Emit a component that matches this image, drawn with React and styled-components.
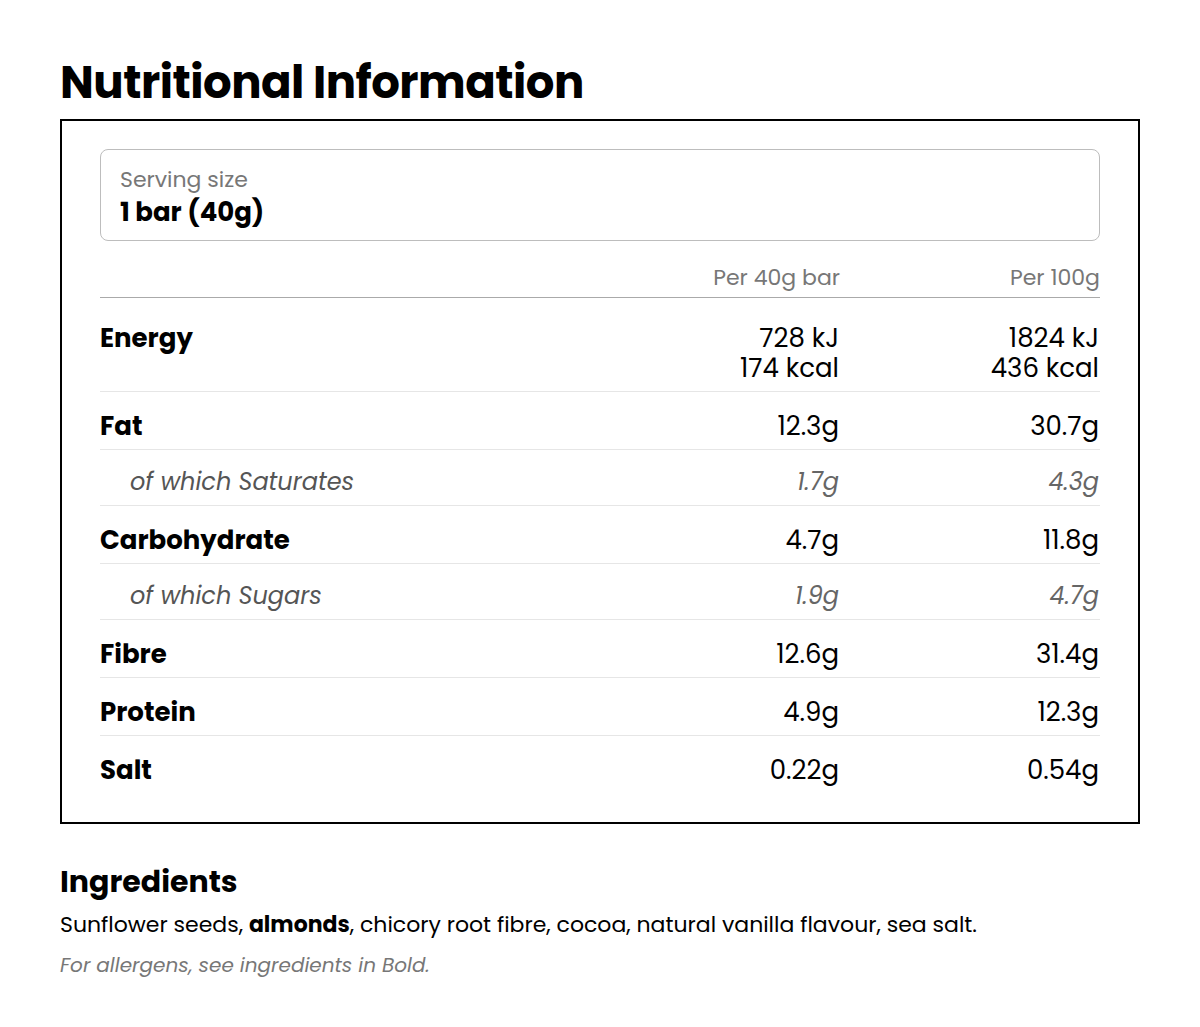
import React from 'react';
import styled, { createGlobalStyle } from 'styled-components';

const GlobalStyle = createGlobalStyle`
  html, body {
    margin: 0;
    padding: 0;
    background: #fff;
  }
  body {
    font-family: Poppins, Inter, "Noto Sans", sans-serif;
    color: #000;
  }
`;

const rows = [
  { label: 'Energy', a: ['728 kJ', '174 kcal'], b: ['1824 kJ', '436 kcal'] },
  { label: 'Fat', a: ['12.3g'], b: ['30.7g'] },
  { label: 'of which Saturates', a: ['1.7g'], b: ['4.3g'], sub: true },
  { label: 'Carbohydrate', a: ['4.7g'], b: ['11.8g'] },
  { label: 'of which Sugars', a: ['1.9g'], b: ['4.7g'], sub: true },
  { label: 'Fibre', a: ['12.6g'], b: ['31.4g'] },
  { label: 'Protein', a: ['4.9g'], b: ['12.3g'] },
  { label: 'Salt', a: ['0.22g'], b: ['0.54g'] },
];

const Page = styled.main`
  width: 1080px;
  padding: 54px 60px 40px;
`;

const Title = styled.h1`
  margin: 0 0 7px;
  font-size: 45px;
  font-weight: 700;
  line-height: 58px;
  letter-spacing: -0.5px;
`;

const Panel = styled.section`
  border: 2px solid #000;
  padding: 28px 38px 29px;
`;

const Serving = styled.div`
  border: 1px solid #bdbdbd;
  border-radius: 8px;
  padding: 15px 19px 11px;
  margin-bottom: 22px;
`;

const ServingLabel = styled.div`
  font-size: 22px;
  line-height: 30px;
  color: #777;
`;

const ServingValue = styled.div`
  font-size: 26px;
  line-height: 34px;
  font-weight: 700;
`;

const Grid = styled.div`
  display: grid;
  grid-template-columns: 1fr 260px 260px;
  align-items: start;
`;

const HeadRow = styled(Grid)`
  padding-bottom: 4px;
  border-bottom: 1px solid #aaa;
`;

const Row = styled(Grid)`
  padding: ${(p) => (p.$first ? '25px' : p.$sub ? '17px' : '19px')} 0 8px;
  border-bottom: 1px solid #e6e6e6;
  &:last-child {
    border-bottom: none;
  }
`;

const Head = styled.div`
  text-align: right;
  font-size: 22px;
  line-height: 30px;
  color: #777;
`;

const Label = styled.div`
  font-size: ${(p) => (p.$sub ? '24px' : '26px')};
  line-height: 30px;
  font-weight: ${(p) => (p.$sub ? 400 : 700)};
  font-style: ${(p) => (p.$sub ? 'italic' : 'normal')};
  color: ${(p) => (p.$sub ? '#555' : '#000')};
  padding-left: ${(p) => (p.$sub ? '30px' : '0')};
`;

const Value = styled.div`
  text-align: right;
  font-size: ${(p) => (p.$sub ? '24px' : '26px')};
  line-height: 30px;
  font-style: ${(p) => (p.$sub ? 'italic' : 'normal')};
  color: ${(p) => (p.$sub ? '#666' : '#000')};
  padding-right: 1px;
`;

const Ingredients = styled.section`
  margin-top: 37px;
`;

const SubTitle = styled.h2`
  margin: 0 0 7px;
  font-size: 30px;
  line-height: 42px;
  font-weight: 700;
`;

const Text = styled.p`
  margin: 0;
  font-size: 22px;
  line-height: 30px;
  & b {
    font-weight: 700;
  }
`;

const Note = styled.p`
  margin: 10px 0 0;
  font-size: 20px;
  line-height: 30px;
  font-style: italic;
  color: #777;
`;

export default function App() {
  return (
    <Page>
      <GlobalStyle />
      <Title>Nutritional Information</Title>
      <Panel>
        <Serving>
          <ServingLabel>Serving size</ServingLabel>
          <ServingValue>1 bar (40g)</ServingValue>
        </Serving>
        <HeadRow>
          <div />
          <Head>Per 40g bar</Head>
          <Head>Per 100g</Head>
        </HeadRow>
        {rows.map((r, i) => (
          <Row key={r.label} $sub={r.sub} $first={i === 0}>
            <Label $sub={r.sub}>{r.label}</Label>
            <Value $sub={r.sub}>
              {r.a.map((v) => (
                <div key={v}>{v}</div>
              ))}
            </Value>
            <Value $sub={r.sub}>
              {r.b.map((v) => (
                <div key={v}>{v}</div>
              ))}
            </Value>
          </Row>
        ))}
      </Panel>
      <Ingredients>
        <SubTitle>Ingredients</SubTitle>
        <Text>
          Sunflower seeds, <b>almonds</b>, chicory root fibre, cocoa, natural
          vanilla flavour, sea salt.
        </Text>
        <Note>For allergens, see ingredients in Bold.</Note>
      </Ingredients>
    </Page>
  );
}
